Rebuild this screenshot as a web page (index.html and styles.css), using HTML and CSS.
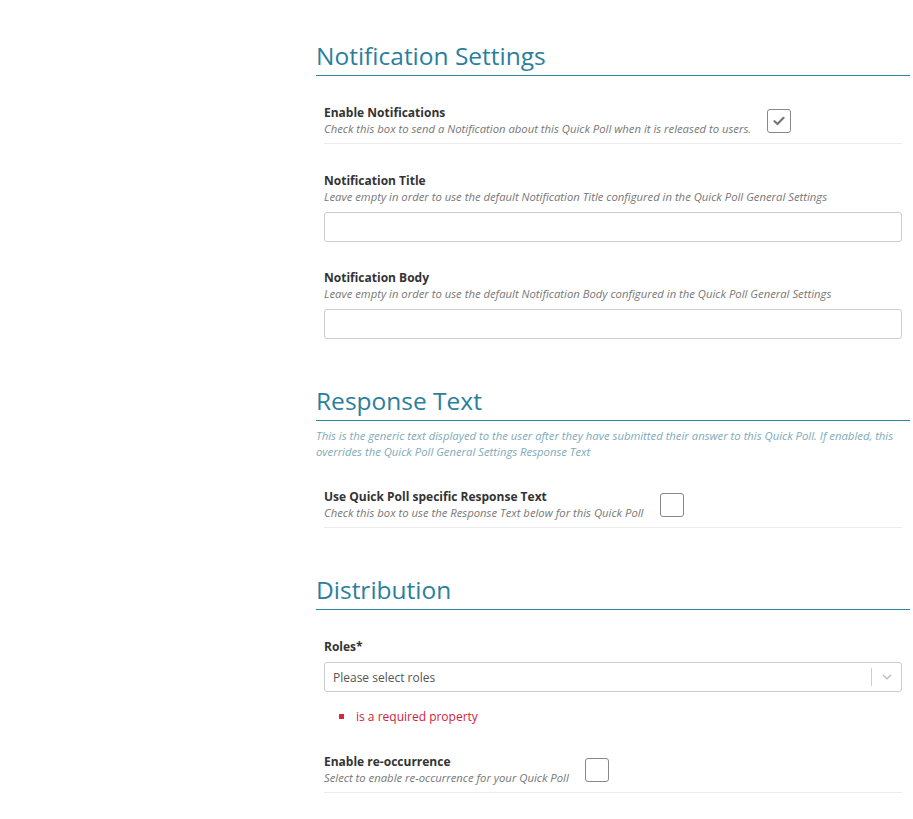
FILE: index.html
```html
<!DOCTYPE html>
<html>
<head>
<meta charset="utf-8">
<link rel="stylesheet" href="styles.css">
</head>
<body>
<div class="page">
  <div class="content">
    <section class="section s-notif">
      <h2 class="section-title">Notification Settings</h2>
      <div class="field check-field">
        <div class="field-text">
          <div class="label">Enable Notifications</div>
          <div class="help">Check this box to send a Notification about this Quick Poll when it is released to users.</div>
        </div>
        <span class="checkbox checked">
          <svg width="12" height="10" viewBox="0 0 12 10"><path d="M1.5 5.2 L4.5 8 L10.5 1.8" fill="none" stroke="#777" stroke-width="2.2" stroke-linecap="round" stroke-linejoin="round"/></svg>
        </span>
      </div>
      <div class="field input-field">
        <div class="label">Notification Title</div>
        <div class="help">Leave empty in order to use the default Notification Title configured in the Quick Poll General Settings</div>
        <div class="input"></div>
      </div>
      <div class="field input-field">
        <div class="label">Notification Body</div>
        <div class="help">Leave empty in order to use the default Notification Body configured in the Quick Poll General Settings</div>
        <div class="input"></div>
      </div>
    </section>

    <section class="section s-response">
      <h2 class="section-title">Response Text</h2>
      <p class="section-desc">This is the generic text displayed to the user after they have submitted their answer to this Quick Poll. If enabled, this overrides the Quick Poll General Settings Response Text</p>
      <div class="field check-field">
        <div class="field-text">
          <div class="label">Use Quick Poll specific Response Text</div>
          <div class="help">Check this box to use the Response Text below for this Quick Poll</div>
        </div>
        <span class="checkbox"></span>
      </div>
    </section>

    <section class="section s-dist">
      <h2 class="section-title">Distribution</h2>
      <div class="field select-field">
        <div class="label">Roles*</div>
        <div class="select">
          <span class="placeholder">Please select roles</span>
          <span class="select-sep"></span>
          <span class="chevron">
            <svg width="10" height="6" viewBox="0 0 10 6"><path d="M1 1 L5 4.8 L9 1" fill="none" stroke="#bbb" stroke-width="1.3"/></svg>
          </span>
        </div>
        <ul class="errors"><li>is a required property</li></ul>
      </div>
      <div class="field check-field">
        <div class="field-text">
          <div class="label">Enable re-occurrence</div>
          <div class="help">Select to enable re-occurrence for your Quick Poll</div>
        </div>
        <span class="checkbox"></span>
      </div>
    </section>
  </div>
</div>
</body>
</html>
```
FILE: styles.css
```css
* { box-sizing: border-box; }
html, body { margin: 0; padding: 0; background: #fff; }
body {
  font-family: "Open Sans", "Noto Sans", sans-serif;
  color: #333;
  font-size: 12px;
}
.page {
  display: flex;
  justify-content: flex-start;
  padding-left: 316px;
  padding-right: 3px;
  padding-top: 38px;
}
.content { width: 594px; }
.section-title {
  margin: 0;
  font-weight: 400;
  font-size: 24.5px;
  line-height: 36px;
  color: #2b7f9c;
  border-bottom: 1px solid #2b86a3;
  padding-bottom: 1px;
}
.field {
  margin-left: 8px;
  margin-right: 8px;
}
.check-field {
  display: flex;
  align-items: center;
  gap: 16px;
  border-bottom: 1px solid #eaeaea;
  padding-bottom: 6px;
}
.label {
  font-weight: 700;
  font-size: 12px;
  line-height: 17px;
  color: #333;
}
.help {
  font-style: italic;
  font-size: 11.3px;
  line-height: 16px;
  color: #777;
}
.checkbox {
  width: 24px;
  height: 24px;
  border: 1px solid #888;
  border-radius: 3px;
  display: flex;
  align-items: center;
  justify-content: center;
  flex: none;
}
.input {
  height: 30px;
  border: 1px solid #ccc;
  border-radius: 3px;
  margin-top: 7px;
}
.s-notif .check-field { margin-top: 28px; }
.s-notif .input-field { margin-top: 28px; }
.s-notif .input-field + .input-field { margin-top: 27px; }
.s-response { margin-top: 44px; }
.section-desc {
  margin: 7px 0 0 0;
  font-style: italic;
  font-size: 11.3px;
  line-height: 16px;
  color: #7eaabb;
}
.s-response .check-field { margin-top: 28px; gap: 17px; }
.s-dist { margin-top: 44px; }
.select-field { margin-top: 28px; }
.select {
  margin-top: 7px;
  height: 30px;
  border: 1px solid #ccc;
  border-radius: 3px;
  display: flex;
  align-items: center;
  padding-left: 8px;
}
.placeholder {
  flex: 1;
  color: #555;
  font-size: 12px;
}
.select-sep {
  width: 1px;
  height: 18px;
  background: #ccc;
}
.chevron {
  width: 29px;
  display: flex;
  justify-content: center;
  align-items: center;
}
.errors {
  margin: 16px 0 0 0;
  padding-left: 32px;
  list-style: none;
  color: #d0213e;
  font-size: 12px;
  line-height: 17px;
}
.errors li { position: relative; }
.errors li::before {
  content: "";
  position: absolute;
  left: -17px;
  top: 6px;
  width: 5px;
  height: 5px;
  background: #d8283f;
}
.s-dist .check-field { margin-top: 28px; }
```
